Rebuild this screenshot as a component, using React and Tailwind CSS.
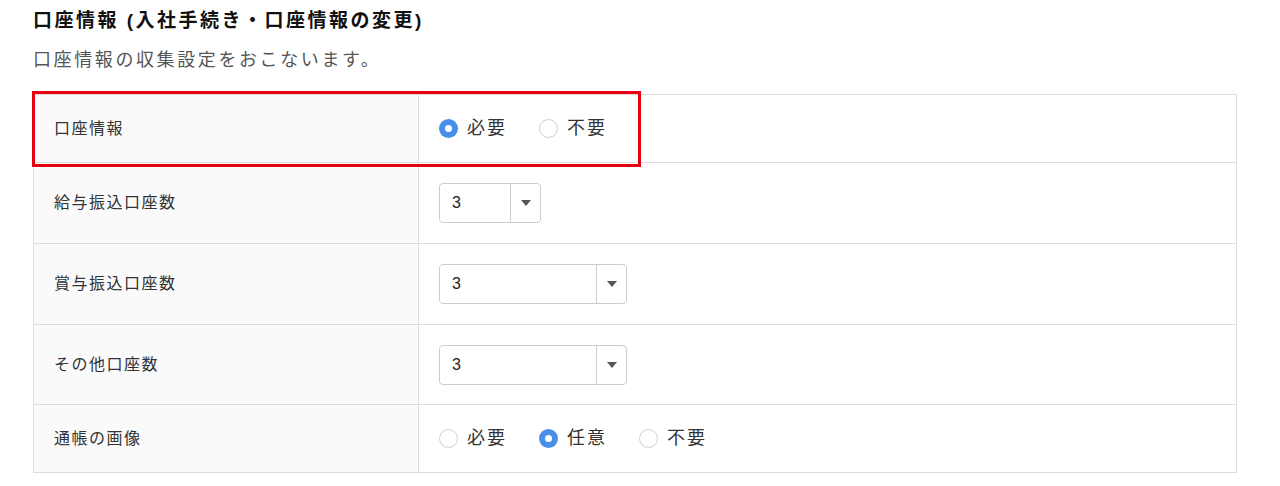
import React, { useState } from 'react';

const font = { fontFamily: '"Liberation Sans", "Noto Sans CJK JP", sans-serif' };

function Radio({ checked, label, onClick }) {
  return (
    <button onClick={onClick} className="flex items-center gap-[9px] text-[18px] tracking-[2px] text-[#333]">
      {checked ? (
        <span className="w-[19px] h-[19px] rounded-full bg-[#4a8fe7] flex items-center justify-center">
          <span className="w-[7px] h-[7px] rounded-full bg-white" />
        </span>
      ) : (
        <span className="w-[19px] h-[19px] rounded-full border border-[#cfcfcf] bg-white" />
      )}
      <span>{label}</span>
    </button>
  );
}

function Select({ value, width }) {
  return (
    <div className={`flex h-[40px] ${width} border border-[#cccccc] rounded-[4px] bg-white`}>
      <div className="flex-1 flex items-center pl-[12px] text-[16px] text-[#222]">{value}</div>
      <div className="w-[30px] border-l border-[#cccccc] flex items-center justify-center">
        <svg width="10" height="6" viewBox="0 0 10 6">
          <path d="M0 0 L10 0 L5 6 Z" fill="#555" />
        </svg>
      </div>
    </div>
  );
}

export default function App() {
  const [account, setAccount] = useState('need');
  const [passbook, setPassbook] = useState('optional');

  const rows = [
    {
      label: '口座情報',
      h: 'h-[67px]',
      content: (
        <div className="flex items-center gap-[32px]">
          <Radio checked={account === 'need'} label="必要" onClick={() => setAccount('need')} />
          <Radio checked={account === 'none'} label="不要" onClick={() => setAccount('none')} />
        </div>
      ),
    },
    { label: '給与振込口座数', h: 'h-[81px]', content: <Select value="3" width="w-[102px]" /> },
    { label: '賞与振込口座数', h: 'h-[81px]', content: <Select value="3" width="w-[188px]" /> },
    { label: 'その他口座数', h: 'h-[80px]', content: <Select value="3" width="w-[188px]" /> },
    {
      label: '通帳の画像',
      h: 'h-[68px]',
      content: (
        <div className="flex items-center gap-[32px]">
          <Radio checked={passbook === 'need'} label="必要" onClick={() => setPassbook('need')} />
          <Radio checked={passbook === 'optional'} label="任意" onClick={() => setPassbook('optional')} />
          <Radio checked={passbook === 'none'} label="不要" onClick={() => setPassbook('none')} />
        </div>
      ),
    },
  ];

  return (
    <div className="w-[1280px] h-[486px] bg-white px-[33px] pt-[9px]" style={font}>
      <h1 className="text-[19px] font-bold leading-[24px] tracking-[2.5px] text-[#111]">
        口座情報 (入社手続き・口座情報の変更)
      </h1>
      <p className="mt-[15px] text-[18px] leading-[24px] tracking-[2.6px] text-[#555]">
        口座情報の収集設定をおこないます。
      </p>

      <div className="relative mt-[22px] w-[1204px]">
        <div className="border border-[#dddddd]">
          {rows.map((row, i) => (
            <div
              key={i}
              className={`flex ${row.h} ${i > 0 ? 'border-t border-[#dddddd]' : ''}`}
            >
              <div className="w-[385px] bg-[#fafafa] border-r border-[#dddddd] flex items-center pl-[20px] text-[16px] tracking-[1.5px] text-[#333]">
                {row.label}
              </div>
              <div className="flex-1 flex items-center pl-[20px]">{row.content}</div>
            </div>
          ))}
        </div>
        <div className="absolute left-[-1px] top-[-3px] w-[609px] h-[76px] border-[3px] border-[#e60012] pointer-events-none" />
      </div>
    </div>
  );
}
